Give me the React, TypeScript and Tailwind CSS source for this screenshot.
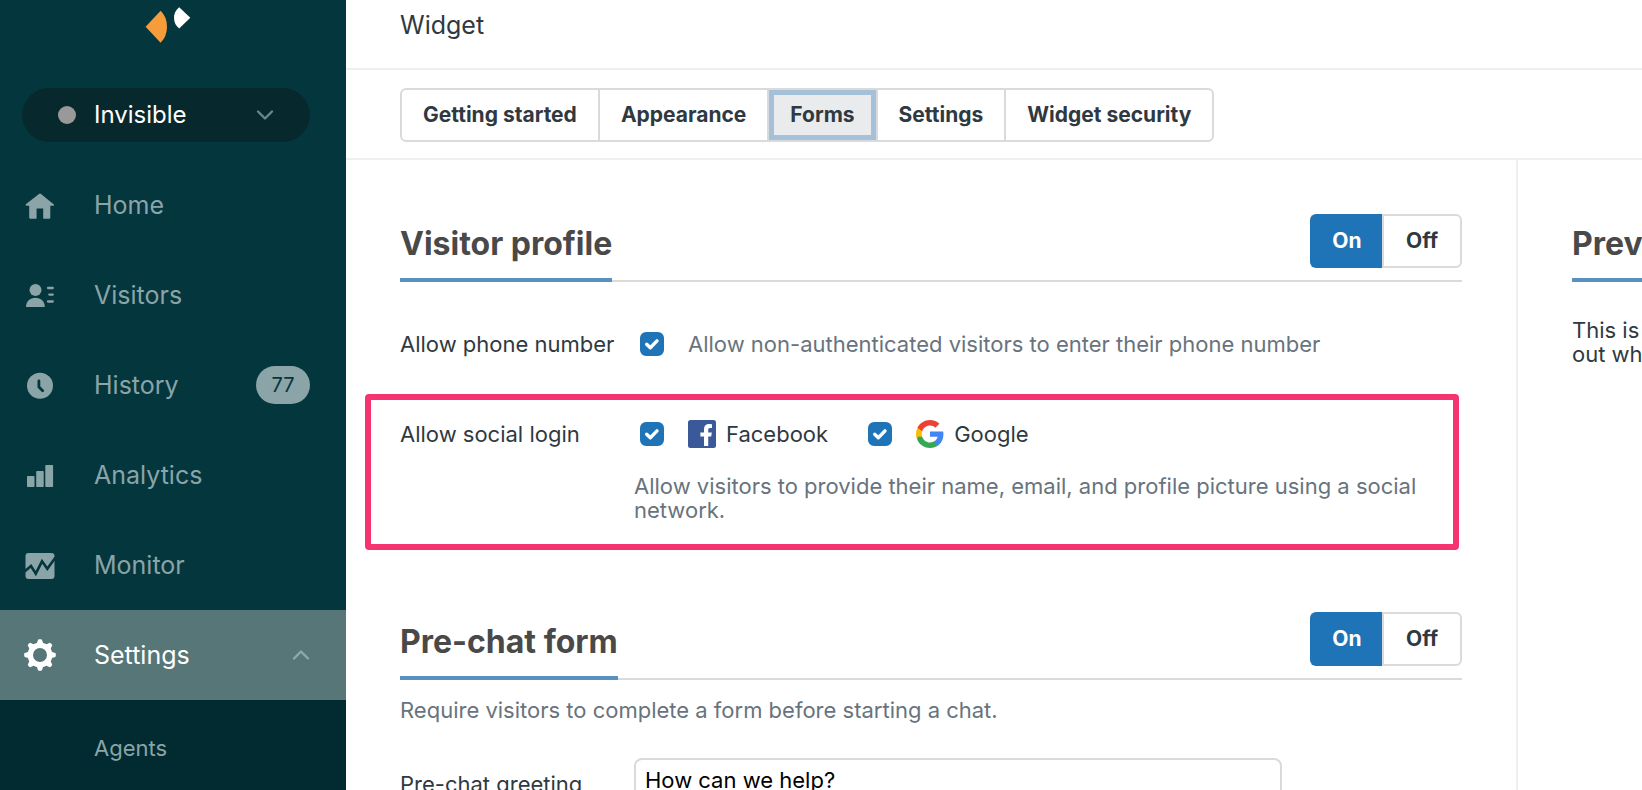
import { useState } from "react";
import type { ReactNode } from "react";

const HomeIcon = () => (
  <svg viewBox="0 0 32 32" className="size-8" fill="currentColor" aria-hidden="true">
    <path d="M15 4.900a1.500 1.500 0 0 1 2 0l12.600 10.300c.8.7.4 1.600-.6 1.600h-2.700v11.700a1.200 1.200 0 0 1-1.200 1.200h-5.300a.6.6 0 0 1-.6-.6V19.400h-6.600v9.700a.6.6 0 0 1-.6.6H6.400a1.200 1.200 0 0 1-1.200-1.200V16.800H2.600c-1 0-1.300-1-.5-1.700z" />
  </svg>
);

const VisitorsIcon = () => (
  <svg viewBox="0 0 32 32" className="size-8" fill="currentColor" aria-hidden="true">
    <circle cx="11.500" cy="11" r="6" />
    <path d="M2 28c0-5.500 4-9.200 9.400-9.200s9.400 3.700 9.400 9.200z" />
    <path d="M24 9h4.800M25.300 15.600h3.500M24 22.500h4.800" stroke="currentColor" strokeWidth="2.300" strokeLinecap="round" />
  </svg>
);

const HistoryIcon = () => (
  <svg viewBox="0 0 32 32" className="size-8" aria-hidden="true">
    <circle cx="16" cy="16.800" r="13" fill="currentColor" />
    <path d="M14.900 12v6l3.800 3.800" fill="none" stroke="#04363d" strokeWidth="2.800" strokeLinecap="round" strokeLinejoin="round" />
  </svg>
);

const AnalyticsIcon = () => (
  <svg viewBox="0 0 32 32" className="size-8" fill="currentColor" aria-hidden="true">
    <rect x="3" y="17" width="7.500" height="11" rx="0.800" />
    <rect x="12.200" y="12" width="7.500" height="16" rx="0.800" />
    <rect x="21.300" y="6" width="7.800" height="22" rx="0.800" />
  </svg>
);

const MonitorIcon = () => (
  <svg viewBox="0 0 32 32" className="size-8" aria-hidden="true">
    <rect x="1.500" y="4" width="29" height="26" rx="3" fill="currentColor" />
    <path d="M0.500 22.500 7 17l4.800 7.700L18 12.300l5.300 7.500L31.500 8.500" fill="none" stroke="#04363d" strokeWidth="2.600" />
  </svg>
);

const GearIcon = () => (
  <svg viewBox="0 0 32 32" className="size-8" fill="currentColor" aria-hidden="true">
    <circle cx="16" cy="16" r="9.700" fill="none" stroke="currentColor" strokeWidth="5.400" />
    {[0, 45, 90, 135, 180, 225, 270, 315].map((angle) => (
      <path key={angle} d="M12.400 5.500 14 .9q.2-.7.9-.7h2.200q.7 0 .9.7l1.600 4.600z" transform={`rotate(${angle} 16 16)`} />
    ))}
  </svg>
);

const Chevron = ({ up = false }: { up?: boolean }) => (
  <svg viewBox="0 0 18 12" className="h-3 w-[18px]" fill="none" stroke="currentColor" strokeWidth="2.400" strokeLinecap="round" strokeLinejoin="round" aria-hidden="true">
    <path d={up ? "M2 9.500 9 2.500l7 7" : "M2 2.500l7 7 7-7"} />
  </svg>
);

const Logo = () => (
  <svg viewBox="0 0 46 38" className="h-[38px] w-[46px]" aria-hidden="true">
    <path d="M.6 21.700 15.600 5.800q6.400 6.200 6.400 15.900t-6.400 16.100z" fill="#f79c3b" />
    <path d="M45.300 12.800 34.200 2.200q-5.200 4-5.200 10.600t5.200 10.800z" fill="#fff" />
  </svg>
);

const FacebookIcon = () => (
  <svg viewBox="0 0 28 28" className="size-7" aria-hidden="true">
    <rect width="28" height="28" rx="2.500" fill="#3b5998" />
    <path d="M16 26V16.500h-3.600v-4H16V9.400c0-3.600 2.200-5.400 5.300-5.400l2.700.2v3.700h-1.800c-1.700 0-2 .8-2 2v2.600h3.600l-.6 4h-3V26z" fill="#fff" />
  </svg>
);

const GoogleIcon = () => (
  <svg viewBox="2 2 44 44" className="size-7" aria-hidden="true">
    <path fill="#fbbc05" d="M11.700 28.180A13.100 13.100 0 0 1 11 24c0-1.450.25-2.860.69-4.180v-5.700H4.340A21.990 21.990 0 0 0 2 24c0 3.550.85 6.910 2.340 9.880z" />
    <path fill="#ea4335" d="M24 10.750c3.230 0 6.130 1.110 8.410 3.290l6.310-6.310C34.910 4.180 29.930 2 24 2 15.400 2 7.960 6.930 4.340 14.120l7.350 5.700c1.730-5.200 6.580-9.070 12.310-9.070z" />
    <path fill="#34a853" d="M24 46c5.940 0 10.920-1.970 14.560-5.330l-7.110-5.520c-1.970 1.320-4.490 2.100-7.450 2.100-5.730 0-10.580-3.870-12.310-9.070H4.340v5.700C7.960 41.070 15.400 46 24 46z" />
    <path fill="#4285f4" d="M45.120 24.500c0-1.560-.14-3.060-.4-4.500H24v8.510h11.840c-.51 2.750-2.060 5.080-4.390 6.640v5.520h7.110c4.160-3.830 6.560-9.470 6.560-16.170z" />
  </svg>
);

type NavItemProps = { icon: ReactNode; label: string; active?: boolean; children?: ReactNode };

const NavItem = ({ icon, label, active = false, children }: NavItemProps) => (
  <a
    href="#"
    aria-current={active ? "page" : undefined}
    className={
      active
        ? "flex h-[90px] items-center bg-[#567678] pr-9 pl-6 text-white"
        : "flex h-[90px] items-center pr-9 pl-6 text-[#8aa4a8]"
    }
  >
    {icon}
    <span className="ml-[38px] flex-1 text-[25px]">{label}</span>
    {children}
  </a>
);

const Toggle = ({ label }: { label: string }) => {
  const [on, setOn] = useState(true);
  const selected = "bg-[#1f73b7] border-[#1f73b7] text-white";
  const plain = "bg-white border-[#d8dadc] text-[#2f3941]";
  return (
    <div role="group" aria-label={label} className="flex h-[54px] text-[21px] font-bold">
      <button type="button" aria-pressed={on} onClick={() => setOn(true)} className={`w-[72px] rounded-l-md border-y-2 border-l-2 ${on ? selected : plain}`}>
        On
      </button>
      <button type="button" aria-pressed={!on} onClick={() => setOn(false)} className={`w-20 rounded-r-md border-2 ${on ? plain : selected}`}>
        Off
      </button>
    </div>
  );
};

const Checkbox = ({ id }: { id: string }) => (
  <span className="grid size-6 shrink-0 place-items-center">
    <input id={id} type="checkbox" defaultChecked className="peer col-start-1 row-start-1 size-6 appearance-none rounded-md border-2 border-[#1f73b7] bg-white checked:bg-[#1f73b7]" />
    <svg viewBox="0 0 24 24" className="pointer-events-none invisible col-start-1 row-start-1 size-6 peer-checked:visible" fill="none" stroke="#fff" strokeWidth="3.400" strokeLinecap="round" strokeLinejoin="round" aria-hidden="true">
      <path d="M6.700 12.300l3.600 3.500 6.700-6.900" />
    </svg>
  </span>
);

const SectionHeading = ({ title }: { title: string }) => (
  <div className="flex h-[68px] items-end justify-between border-b-2 border-[#d8dadc]">
    <h2 className="-mb-0.5 h-[58px] border-b-4 border-[#5a90bd] text-[32px] leading-10 font-bold text-[#494949]">{title}</h2>
    <div className="self-start">
      <Toggle label={title} />
    </div>
  </div>
);

const tabs = ["Getting started", "Appearance", "Forms", "Settings", "Widget security"];

export default function App() {
  const [tab, setTab] = useState("Forms");
  return (
    <div className="flex h-screen overflow-hidden bg-white font-[Inter,'Liberation_Sans',sans-serif] text-[22px] leading-6 text-[#2f3941]">
      <aside className="flex w-[346px] shrink-0 flex-col bg-[#04363d]">
        <div className="flex h-[88px] justify-center pt-[5px] pr-2.5">
          <Logo />
        </div>
        <button type="button" className="mr-9 ml-[22px] flex h-[54px] shrink-0 items-center rounded-full bg-[#07292e] pr-9 pl-9 text-[24px] text-white">
          <span className="size-[18px] rounded-full bg-[#999]" />
          <span className="ml-[18px] flex-1 text-left">Invisible</span>
          <span className="text-[#6b8689]">
            <Chevron />
          </span>
        </button>
        <nav className="flex flex-1 flex-col pt-[18px]">
          <NavItem icon={<HomeIcon />} label="Home" />
          <NavItem icon={<VisitorsIcon />} label="Visitors" />
          <NavItem icon={<HistoryIcon />} label="History">
            <span className="flex h-[38px] w-[54px] items-center justify-center rounded-full bg-[#8aa4a8] text-[20px] text-[#04363d]">77</span>
          </NavItem>
          <NavItem icon={<AnalyticsIcon />} label="Analytics" />
          <NavItem icon={<MonitorIcon />} label="Monitor" />
          <NavItem icon={<GearIcon />} label="Settings" active>
            <span className="text-[#8fa8aa]">
              <Chevron up />
            </span>
          </NavItem>
          <div className="flex-1 bg-[#012b31] pt-9 pl-[94px] text-[#8aa4a8]">
            <a href="#">Agents</a>
          </div>
        </nav>
      </aside>

      <main className="flex min-w-0 flex-1 flex-col">
        <header className="flex h-[70px] shrink-0 border-b-2 border-[#efefef] pt-[13px] pl-[54px]">
          <h1 className="text-[25px]">Widget</h1>
        </header>

        <div className="flex h-[90px] shrink-0 items-start border-b-2 border-[#efefef] pt-[18px] pl-[54px]">
          <div role="tablist" className="flex h-[54px] divide-x-2 divide-[#d8dadc] overflow-hidden rounded-md border-2 border-[#d8dadc] text-[21px] font-bold">
            {tabs.map((name) => (
              <button
                key={name}
                type="button"
                role="tab"
                aria-selected={tab === name}
                onClick={() => setTab(name)}
                className={
                  tab === name
                    ? "bg-[#e9ebed] px-[21px] inset-ring-[5px] inset-ring-[#a5c0d9] outline-none"
                    : "px-[21px] outline-none"
                }
              >
                {name}
              </button>
            ))}
          </div>
        </div>

        <div className="flex min-h-0 flex-1">
          <div className="min-w-0 flex-1 border-r-2 border-[#efefef] pt-[54px] pr-[54px] pl-[54px]">
            <section>
              <SectionHeading title="Visitor profile" />
              <div className="flex items-center pt-[50px]">
                <span className="w-60">Allow phone number</span>
                <Checkbox id="phone" />
                <label htmlFor="phone" className="pl-6 text-[#68737d]">
                  Allow non-authenticated visitors to enter their phone number
                </label>
              </div>

              <div className="relative mt-16 flex">
                <span className="pointer-events-none absolute -top-[26px] right-[3px] -bottom-7 -left-[35px] rounded-sm border-6 border-[#f5346f]" />
                <span className="w-[234px] shrink-0 pt-0.5">Allow social login</span>
                <div className="flex-1">
                  <div className="flex items-center pl-1.5">
                    <Checkbox id="facebook" />
                    <label htmlFor="facebook" className="flex items-center gap-2.5 pr-10 pl-6">
                      <FacebookIcon />
                      Facebook
                    </label>
                    <Checkbox id="google" />
                    <label htmlFor="google" className="flex items-center gap-2.5 pl-6">
                      <GoogleIcon />
                      Google
                    </label>
                  </div>
                  <p className="pt-[26px] pr-9 text-[#68737d]">Allow visitors to provide their name, email, and profile picture using a social network.</p>
                </div>
              </div>
            </section>

            <section className="mt-[90px]">
              <SectionHeading title="Pre-chat form" />
              <p className="pt-[18px] text-[#68737d]">Require visitors to complete a form before starting a chat.</p>
              <div className="flex items-start pt-9">
                <label htmlFor="greeting" className="w-[234px] shrink-0 pt-3.5">
                  Pre-chat greeting
                </label>
                <input id="greeting" type="text" defaultValue="How can we help?" className="h-11 w-[648px] min-w-0 rounded-lg border-2 border-[#d8dadc] px-[9px] text-black outline-none" />
              </div>
            </section>
          </div>

          <aside className="w-[124px] shrink-0 overflow-hidden pt-16 pl-[54px] whitespace-nowrap">
            <h2 className="h-[58px] w-max border-b-4 border-[#5a90bd] text-[32px] leading-10 font-bold text-[#494949]">Preview</h2>
            <p className="pt-9">
              This is
              <br />
              out what
            </p>
          </aside>
        </div>
      </main>
    </div>
  );
}
